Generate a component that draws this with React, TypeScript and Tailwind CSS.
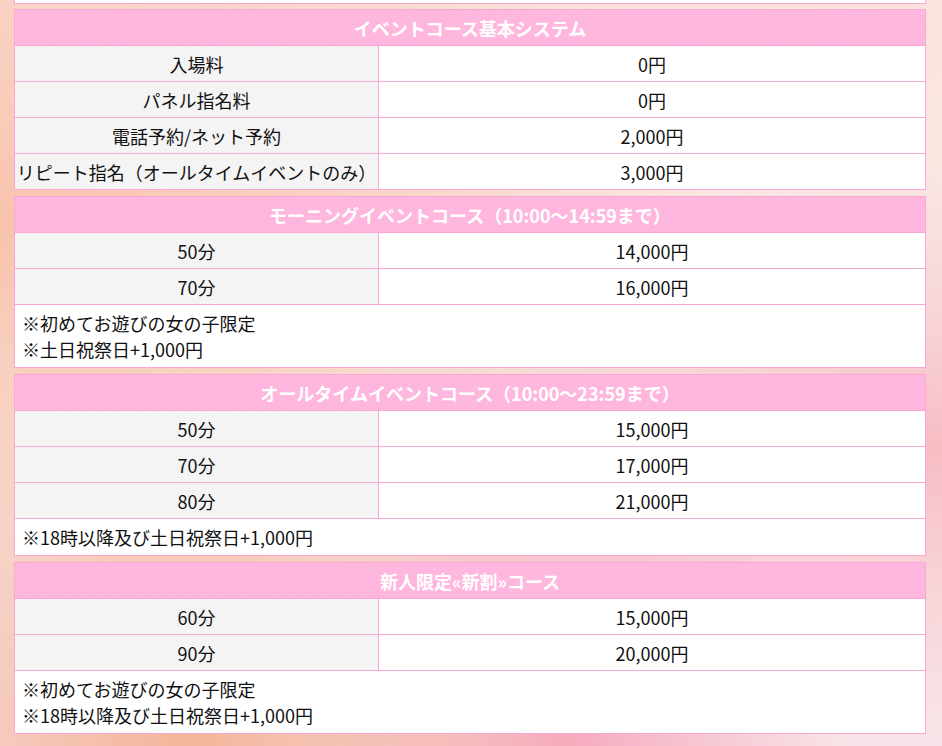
import React from 'react';

type Row = { label: string; price: string };
type Course = { title: string; rows: Row[]; notes?: string[] };

const courses: Course[] = [
  {
    title: 'イベントコース基本システム',
    rows: [
      { label: '入場料', price: '0円' },
      { label: 'パネル指名料', price: '0円' },
      { label: '電話予約/ネット予約', price: '2,000円' },
      { label: 'リピート指名（オールタイムイベントのみ）', price: '3,000円' },
    ],
  },
  {
    title: 'モーニングイベントコース（10:00～14:59まで）',
    rows: [
      { label: '50分', price: '14,000円' },
      { label: '70分', price: '16,000円' },
    ],
    notes: ['※初めてお遊びの女の子限定', '※土日祝祭日+1,000円'],
  },
  {
    title: 'オールタイムイベントコース（10:00～23:59まで）',
    rows: [
      { label: '50分', price: '15,000円' },
      { label: '70分', price: '17,000円' },
      { label: '80分', price: '21,000円' },
    ],
    notes: ['※18時以降及び土日祝祭日+1,000円'],
  },
  {
    title: '新人限定«新割»コース',
    rows: [
      { label: '60分', price: '15,000円' },
      { label: '90分', price: '20,000円' },
    ],
    notes: ['※初めてお遊びの女の子限定', '※18時以降及び土日祝祭日+1,000円'],
  },
];

function CourseTable({ course }: { course: Course }) {
  return (
    <table className="w-full border-collapse table-fixed text-[18px] leading-[24px] text-[#111]">
      <colgroup>
        <col className="w-[364px]" />
        <col />
      </colgroup>
      <thead>
        <tr>
          <th
            colSpan={2}
            className="h-[36px] border border-[#fba7d6] bg-[#ffb5dd] bg-[repeating-linear-gradient(135deg,rgba(255,255,255,0.08)_0px,rgba(255,255,255,0.08)_1px,transparent_1px,transparent_3px)] p-0 text-center font-bold text-white"
          >
            {course.title}
          </th>
        </tr>
      </thead>
      <tbody>
        {course.rows.map((r) => (
          <tr key={r.label}>
            <td className="h-[36px] border border-[#fba7d6] bg-[#f4f4f4] p-0 text-center">{r.label}</td>
            <td className="h-[36px] border border-[#fba7d6] bg-white p-0 text-center">{r.price}</td>
          </tr>
        ))}
        {course.notes && (
          <tr>
            <td colSpan={2} className="border border-[#fba7d6] bg-white px-[7px] py-[5px] leading-[26px]">
              {course.notes.map((n) => (
                <div key={n}>{n}</div>
              ))}
            </td>
          </tr>
        )}
      </tbody>
    </table>
  );
}

export default function App() {
  return (
    <div
      className="min-h-[746px] w-full overflow-hidden bg-[#f6e9ef] bg-[radial-gradient(ellipse_at_0%_30%,#f9c3ad_0%,rgba(249,195,173,0.6)_25%,transparent_55%),radial-gradient(ellipse_at_100%_60%,#f7bcc4_0%,rgba(247,188,196,0.5)_20%,transparent_45%),radial-gradient(ellipse_at_20%_100%,#f4b59a_0%,transparent_40%),radial-gradient(ellipse_at_60%_100%,#f6a9c0_0%,transparent_35%),linear-gradient(180deg,#fbe3dc_0%,#f7ede9_50%,#f8e4e8_100%)]"
      style={{ fontFamily: '"Noto Sans CJK JP", "Noto Sans", sans-serif' }}
    >
      <div className="ml-[14px] w-[912px]">
        <div className="h-[4px] border-x border-b border-[#fba7d6] bg-white" />
        <div className="mt-[5px] flex flex-col gap-[6px]">
          {courses.map((c) => (
            <CourseTable key={c.title} course={c} />
          ))}
        </div>
      </div>
    </div>
  );
}
